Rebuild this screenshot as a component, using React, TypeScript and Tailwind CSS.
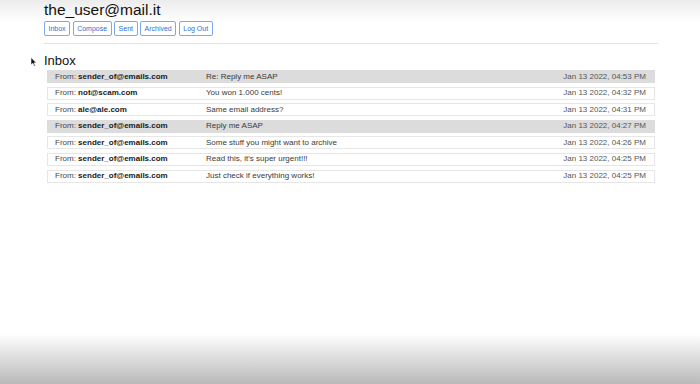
import React from "react";

type Mail = {
  from: string;
  subject: string;
  date: string;
  read: boolean;
};

const MAILS: Mail[] = [
  { from: "sender_of@emails.com", subject: "Re: Reply me ASAP", date: "Jan 13 2022, 04:53 PM", read: true },
  { from: "not@scam.com", subject: "You won 1.000 cents!", date: "Jan 13 2022, 04:32 PM", read: false },
  { from: "ale@ale.com", subject: "Same email address?", date: "Jan 13 2022, 04:31 PM", read: false },
  { from: "sender_of@emails.com", subject: "Reply me ASAP", date: "Jan 13 2022, 04:27 PM", read: true },
  { from: "sender_of@emails.com", subject: "Some stuff you might want to archive", date: "Jan 13 2022, 04:26 PM", read: false },
  { from: "sender_of@emails.com", subject: "Read this, it's super urgent!!!", date: "Jan 13 2022, 04:25 PM", read: false },
  { from: "sender_of@emails.com", subject: "Just check if everything works!", date: "Jan 13 2022, 04:25 PM", read: false },
];

const NAV = ["Inbox", "Compose", "Sent", "Archived", "Log Out"];

function Cursor() {
  return (
    <svg className="absolute left-[30px] top-[57px] pointer-events-none" width="8" height="10" viewBox="0 0 8 10">
      <path d="M1 0.5 L1 8 L2.8 6.3 L4.2 9.3 L5.3 8.8 L3.9 5.9 L6.3 5.8 Z" fill="#111" stroke="#fff" strokeWidth="0.6" />
    </svg>
  );
}

function MailRow({ mail }: { mail: Mail }) {
  return (
    <div
      className={`flex items-center h-[13px] border px-[7px] text-[8px] leading-none ${
        mail.read ? "bg-[#dcdcdc] border-[#dcdcdc]" : "bg-white border-[#e6e6e6]"
      }`}
    >
      <div className="w-[151px] shrink-0 text-[#444] whitespace-nowrap">
        From: <span className="font-bold text-[#1a1a1a]">{mail.from}</span>
      </div>
      <div className="flex-1 text-[#3a3a3a] whitespace-nowrap">{mail.subject}</div>
      <div className="text-[#555] whitespace-nowrap pr-px">{mail.date}</div>
    </div>
  );
}

export default function App() {
  return (
    <div className="relative h-[384px] w-[700px] overflow-hidden bg-white font-['Liberation_Sans',Arial,sans-serif]">
      <div className="absolute inset-x-0 top-0 h-[22px] bg-gradient-to-b from-[#ececec] to-white pointer-events-none" />

      <div className="relative ml-[44px] w-[614px]">
        <h1 className="text-[15.5px] leading-none pt-[2px] text-[#111]">the_user@mail.it</h1>

        <div className="flex gap-[2.5px] mt-[3.5px]">
          {NAV.map((label) => (
            <button
              key={label}
              className="h-[14.5px] px-[3.5px] rounded-[2px] border border-[#7da9ea] bg-white text-[7px] leading-none text-[#2f6fd6]"
            >
              {label}
            </button>
          ))}
        </div>

        <hr className="mt-[7.5px] border-t border-[#e2e2e2]" />

        <h2 className="text-[13px] leading-none mt-[10px] text-[#111]">Inbox</h2>

        <div className="flex flex-col gap-[3.6px] mx-[3px] mt-[3px]">
          {MAILS.map((mail, i) => (
            <MailRow key={i} mail={mail} />
          ))}
        </div>
      </div>

      <Cursor />

      <div className="absolute inset-x-0 bottom-0 h-[50px] bg-gradient-to-b from-white to-[#b9b9b9] pointer-events-none" />
    </div>
  );
}
